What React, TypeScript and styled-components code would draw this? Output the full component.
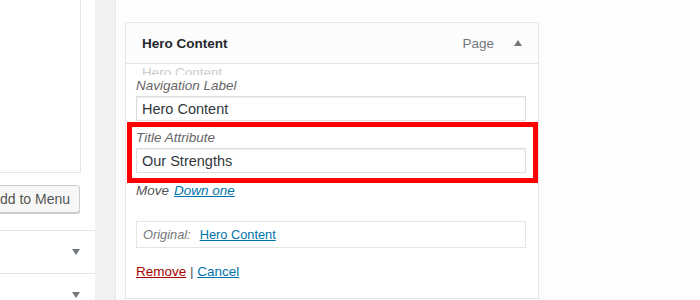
import React from "react";
import styled, { createGlobalStyle } from "styled-components";

const Global = createGlobalStyle`
  html, body { margin: 0; padding: 0; background: #fff; }
  body { font-family: "Liberation Sans", Arial, sans-serif; color: #23282d; }
  #root { width: 700px; height: 300px; overflow: hidden; }
`;

const Page = styled.div`
  display: flex;
  width: 700px;
  height: 300px;
  overflow: hidden;
`;

const LeftColumn = styled.div`
  width: 95px;
  flex: none;
  background: #fff;
  display: flex;
  flex-direction: column;
  overflow: hidden;
`;

const ListBox = styled.div`
  margin: -1px 0 0 -10px;
  width: 89px;
  height: 173px;
  border: 1px solid #e5e5e5;
  border-top: none;
  background: #fff;
  flex: none;
`;

const AddButton = styled.button`
  flex: none;
  align-self: flex-start;
  margin: 12px 0 0 -20px;
  width: 100px;
  height: 28px;
  box-sizing: border-box;
  border: 1px solid #ccc;
  border-radius: 3px;
  background: #f7f7f7;
  box-shadow: 0 1px 0 #ccc;
  font-family: "Liberation Sans", Arial, sans-serif;
  font-size: 14px;
  color: #555;
  text-align: right;
  padding: 0 9px 0 0;
  white-space: nowrap;
`;

const Accordion = styled.div`
  margin-top: 17px;
  border-top: 1px solid #e5e5e5;
  height: 42px;
  display: flex;
  align-items: center;
  justify-content: flex-end;
  padding-right: 15px;
  flex: none;
  & + & {
    margin-top: 0;
  }
`;

const Arrow = styled.span`
  width: 0;
  height: 0;
  border-left: 4px solid transparent;
  border-right: 4px solid transparent;
  border-top: 6px solid #72777c;
`;

const Gutter = styled.div`
  width: 20px;
  flex: none;
  background: #f1f1f1;
`;

const RightPane = styled.div`
  flex: 1;
  border-left: 1px solid #e8e8e8;
  background: #fdfdfd;
  padding: 22px 0 0 9px;
`;

const Card = styled.div`
  width: 412px;
  height: 275px;
  border: 1px solid #e5e5e5;
  background: #fff;
  display: flex;
  flex-direction: column;
`;

const CardHeader = styled.div`
  height: 40px;
  border-bottom: 1px solid #e5e5e5;
  display: flex;
  align-items: center;
  padding: 0 16px 0 16px;
  background: #fcfcfc;
`;

const Title = styled.div`
  flex: 1;
  font-weight: bold;
  font-size: 13.5px;
  color: #23282d;
`;

const TypeLabel = styled.span`
  font-size: 13.5px;
  color: #72777c;
  margin-right: 20px;
`;

const UpArrow = styled.span`
  width: 0;
  height: 0;
  border-left: 4px solid transparent;
  border-right: 4px solid transparent;
  border-bottom: 6px solid #72777c;
`;

const CardBody = styled.div`
  position: relative;
  padding: 0 12px 0 10px;
  display: flex;
  flex-direction: column;
`;

const Ghost = styled.div`
  position: absolute;
  left: 16px;
  top: 3px;
  font-size: 13.5px;
  color: #ccc;
  height: 8px;
  overflow: hidden;
  line-height: 12px;
  white-space: nowrap;
`;

const Field = styled.div<{ $highlight?: boolean; $top: number }>`
  position: relative;
  display: flex;
  flex-direction: column;
  margin-top: ${(p) => p.$top}px;
  ${(p) =>
    p.$highlight
      ? `
    &::after {
      content: "";
      position: absolute;
      left: -9px;
      right: -12px;
      top: -7px;
      bottom: -10px;
      border: 5px solid #f00;
      pointer-events: none;
    }
  `
      : ""}
`;

const Label = styled.div`
  font-style: italic;
  font-size: 13.5px;
  color: #666;
  height: 18px;
  line-height: 18px;
  margin-bottom: 1px;
`;

const TextInput = styled.div`
  height: 23px;
  border: 1px solid #ddd;
  box-shadow: inset 0 1px 2px rgba(0, 0, 0, 0.07);
  background: #fff;
  display: flex;
  align-items: center;
  padding-left: 5px;
  font-size: 14.5px;
  color: #32373c;
`;

const MoveRow = styled.div`
  margin-top: 9px;
  font-size: 13.5px;
  height: 18px;
  line-height: 18px;
  display: flex;
  gap: 5px;
`;

const MoveLabel = styled.span`
  font-style: italic;
  color: #555;
`;

const Link = styled.a<{ $danger?: boolean }>`
  color: ${(p) => (p.$danger ? "#a00" : "#0073aa")};
  text-decoration: underline;
  cursor: pointer;
`;

const ItalicLink = styled(Link)`
  font-style: italic;
`;

const OriginalBox = styled.div`
  margin-top: 21px;
  height: 25px;
  border: 1px solid #e5e5e5;
  display: flex;
  align-items: center;
  padding-left: 6px;
  font-size: 12.8px;
  gap: 9px;
`;

const OriginalLabel = styled.span`
  font-style: italic;
  color: #72777c;
`;

const ActionRow = styled.div`
  margin-top: 15px;
  font-size: 13.5px;
  height: 18px;
  line-height: 18px;
  color: #555;
`;

export default function App() {
  return (
    <>
      <Global />
      <Page>
        <LeftColumn>
          <ListBox />
          <AddButton>Add to Menu</AddButton>
          <Accordion>
            <Arrow />
          </Accordion>
          <Accordion>
            <Arrow />
          </Accordion>
        </LeftColumn>
        <Gutter />
        <RightPane>
          <Card>
            <CardHeader>
              <Title>Hero Content</Title>
              <TypeLabel>Page</TypeLabel>
              <UpArrow />
            </CardHeader>
            <CardBody>
              <Ghost>Hero Content</Ghost>
              <Field $top={13}>
                <Label>Navigation Label</Label>
                <TextInput>Hero Content</TextInput>
              </Field>
              <Field $highlight $top={8}>
                <Label>Title Attribute</Label>
                <TextInput>Our Strengths</TextInput>
              </Field>
              <MoveRow>
                <MoveLabel>Move</MoveLabel>
                <ItalicLink>Down one</ItalicLink>
              </MoveRow>
              <OriginalBox>
                <OriginalLabel>Original:</OriginalLabel>
                <Link>Hero Content</Link>
              </OriginalBox>
              <ActionRow>
                <Link $danger>Remove</Link> | <Link>Cancel</Link>
              </ActionRow>
            </CardBody>
          </Card>
        </RightPane>
      </Page>
    </>
  );
}
